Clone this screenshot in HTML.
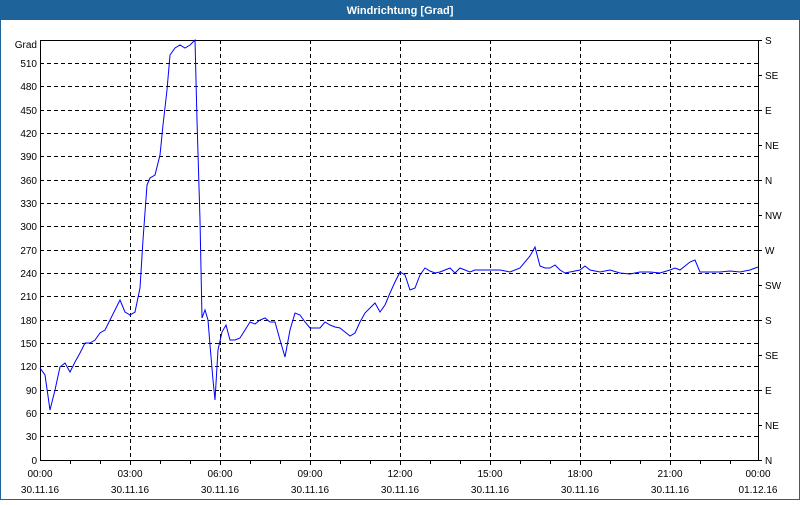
<!DOCTYPE html>
<html><head><meta charset="utf-8"><style>
html,body{margin:0;padding:0;background:#fff;}
body{width:800px;height:500px;overflow:hidden;font-family:"Liberation Sans",sans-serif;}
</style></head><body>
<svg width="800" height="500" viewBox="0 0 800 500" xmlns="http://www.w3.org/2000/svg" font-family="Liberation Sans, sans-serif" font-size="10">
<rect x="0" y="0" width="800" height="500" fill="#fff"/>
<rect x="0.5" y="0.5" width="799" height="499" fill="none" stroke="#1e6399"/>
<rect x="0" y="0" width="800" height="20" fill="#1e6399"/>
<text x="400" y="14" text-anchor="middle" fill="#fff" font-weight="bold" font-size="11">Windrichtung [Grad]</text>
<g stroke="#000" stroke-dasharray="4,3" stroke-width="1">
<line x1="40" y1="63.5" x2="758" y2="63.5"/><line x1="40" y1="86.5" x2="758" y2="86.5"/><line x1="40" y1="110.5" x2="758" y2="110.5"/><line x1="40" y1="133.5" x2="758" y2="133.5"/><line x1="40" y1="156.5" x2="758" y2="156.5"/><line x1="40" y1="180.5" x2="758" y2="180.5"/><line x1="40" y1="203.5" x2="758" y2="203.5"/><line x1="40" y1="226.5" x2="758" y2="226.5"/><line x1="40" y1="250.5" x2="758" y2="250.5"/><line x1="40" y1="273.5" x2="758" y2="273.5"/><line x1="40" y1="296.5" x2="758" y2="296.5"/><line x1="40" y1="320.5" x2="758" y2="320.5"/><line x1="40" y1="343.5" x2="758" y2="343.5"/><line x1="40" y1="366.5" x2="758" y2="366.5"/><line x1="40" y1="390.5" x2="758" y2="390.5"/><line x1="40" y1="413.5" x2="758" y2="413.5"/><line x1="40" y1="436.5" x2="758" y2="436.5"/>
<line x1="130.5" y1="40" x2="130.5" y2="460"/><line x1="220.5" y1="40" x2="220.5" y2="460"/><line x1="310.5" y1="40" x2="310.5" y2="460"/><line x1="400.5" y1="40" x2="400.5" y2="460"/><line x1="490.5" y1="40" x2="490.5" y2="460"/><line x1="580.5" y1="40" x2="580.5" y2="460"/><line x1="670.5" y1="40" x2="670.5" y2="460"/>
</g>
<rect x="40.5" y="40.5" width="718" height="420" fill="none" stroke="#000"/>
<g stroke="#000">
<line x1="70.5" y1="460" x2="70.5" y2="464"/><line x1="100.5" y1="460" x2="100.5" y2="464"/><line x1="130.5" y1="460" x2="130.5" y2="465"/><line x1="160.5" y1="460" x2="160.5" y2="464"/><line x1="190.5" y1="460" x2="190.5" y2="464"/><line x1="220.5" y1="460" x2="220.5" y2="465"/><line x1="250.5" y1="460" x2="250.5" y2="464"/><line x1="280.5" y1="460" x2="280.5" y2="464"/><line x1="310.5" y1="460" x2="310.5" y2="465"/><line x1="340.5" y1="460" x2="340.5" y2="464"/><line x1="370.5" y1="460" x2="370.5" y2="464"/><line x1="400.5" y1="460" x2="400.5" y2="465"/><line x1="430.5" y1="460" x2="430.5" y2="464"/><line x1="460.5" y1="460" x2="460.5" y2="464"/><line x1="490.5" y1="460" x2="490.5" y2="465"/><line x1="520.5" y1="460" x2="520.5" y2="464"/><line x1="550.5" y1="460" x2="550.5" y2="464"/><line x1="580.5" y1="460" x2="580.5" y2="465"/><line x1="610.5" y1="460" x2="610.5" y2="464"/><line x1="640.5" y1="460" x2="640.5" y2="464"/><line x1="670.5" y1="460" x2="670.5" y2="465"/><line x1="700.5" y1="460" x2="700.5" y2="464"/><line x1="730.5" y1="460" x2="730.5" y2="464"/>
<line x1="758" y1="40.5" x2="762" y2="40.5"/><line x1="758" y1="75.5" x2="762" y2="75.5"/><line x1="758" y1="110.5" x2="762" y2="110.5"/><line x1="758" y1="145.5" x2="762" y2="145.5"/><line x1="758" y1="180.5" x2="762" y2="180.5"/><line x1="758" y1="215.5" x2="762" y2="215.5"/><line x1="758" y1="250.5" x2="762" y2="250.5"/><line x1="758" y1="285.5" x2="762" y2="285.5"/><line x1="758" y1="320.5" x2="762" y2="320.5"/><line x1="758" y1="355.5" x2="762" y2="355.5"/><line x1="758" y1="390.5" x2="762" y2="390.5"/><line x1="758" y1="425.5" x2="762" y2="425.5"/><line x1="758" y1="460.5" x2="762" y2="460.5"/>
</g>
<g text-anchor="end" fill="#000">
<text x="37" y="48">Grad</text>
<text x="37" y="67">510</text><text x="37" y="90">480</text><text x="37" y="114">450</text><text x="37" y="137">420</text><text x="37" y="160">390</text><text x="37" y="184">360</text><text x="37" y="207">330</text><text x="37" y="230">300</text><text x="37" y="254">270</text><text x="37" y="277">240</text><text x="37" y="300">210</text><text x="37" y="324">180</text><text x="37" y="347">150</text><text x="37" y="370">120</text><text x="37" y="394">90</text><text x="37" y="417">60</text><text x="37" y="440">30</text><text x="37" y="464">0</text>
</g>
<g fill="#000">
<text x="765" y="44">S</text><text x="765" y="79">SE</text><text x="765" y="114">E</text><text x="765" y="149">NE</text><text x="765" y="184">N</text><text x="765" y="219">NW</text><text x="765" y="254">W</text><text x="765" y="289">SW</text><text x="765" y="324">S</text><text x="765" y="359">SE</text><text x="765" y="394">E</text><text x="765" y="429">NE</text><text x="765" y="464">N</text>
</g>
<g text-anchor="middle" fill="#000">
<text x="40" y="477">00:00</text><text x="130" y="477">03:00</text><text x="220" y="477">06:00</text><text x="310" y="477">09:00</text><text x="400" y="477">12:00</text><text x="490" y="477">15:00</text><text x="580" y="477">18:00</text><text x="670" y="477">21:00</text><text x="758" y="477">00:00</text>
<text x="40" y="493">30.11.16</text><text x="130" y="493">30.11.16</text><text x="220" y="493">30.11.16</text><text x="310" y="493">30.11.16</text><text x="400" y="493">30.11.16</text><text x="490" y="493">30.11.16</text><text x="580" y="493">30.11.16</text><text x="670" y="493">30.11.16</text><text x="758" y="493">01.12.16</text>
</g>
<polyline fill="none" stroke="#0000ff" stroke-width="1" points="40,368 45,375 50,410 55,390 60,367 65,363 70,372 75,362 80,353 85,343 90,343 95,340 100,333 105,330 110,320 115,310 120,300 125,312 130,315 135,312 140,288 143,240 147,185 150,178 155,175 160,155 163,125 167,90 170,55 175,48 180,45 185,48 190,45 195,40 197,120 200,220 202,318 205,310 208,320 210,345 213,380 215,400 218,350 222,332 226,325 230,340 235,340 240,338 245,330 250,322 255,324 260,320 265,318 270,322 275,322 280,340 285,357 290,330 295,313 300,315 305,322 310,328 315,328 320,328 325,322 330,325 335,327 340,328 345,332 350,336 355,333 360,322 365,313 370,308 375,303 380,312 385,305 390,293 395,282 400,272 405,275 410,290 415,288 420,275 425,268 430,271 435,273 440,272 445,270 450,268 455,273 460,268 465,270 470,272 475,270 480,270 490,270 500,270 510,272 520,268 530,256 535,247 540,266 545,268 550,268 555,265 560,270 565,273 570,272 580,270 585,266 590,270 600,272 610,270 620,273 630,274 640,272 650,272 660,273 670,270 675,268 680,270 685,266 690,262 695,260 700,272 710,272 720,272 730,271 740,272 750,270 758,267"/>
</svg>
</body></html>
